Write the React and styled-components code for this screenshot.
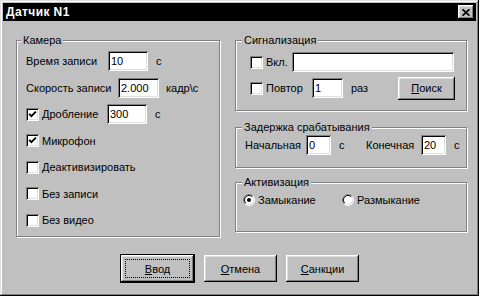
import React from 'react'
import styled, { createGlobalStyle } from 'styled-components'

const Global = createGlobalStyle`
  html, body { margin: 0; padding: 0; background: #c0c0c0; }
  * { box-sizing: border-box; }
`

const raised = `
  box-shadow: inset -1px -1px #000, inset 1px 1px #fff, inset -2px -2px #808080, inset 2px 2px #dfdfdf;
`
const sunken = `
  box-shadow: inset 1px 1px #808080, inset -1px -1px #fff, inset 2px 2px #000, inset -2px -2px #dfdfdf;
`

const Window = styled.div`
  width: 479px;
  height: 296px;
  padding: 3px;
  background: #c0c0c0;
  font-family: "Liberation Sans", Arial, sans-serif;
  font-size: 11px;
  color: #000;
  box-shadow: inset -1px -1px #000, inset 1px 1px #dfdfdf, inset -2px -2px #808080, inset 2px 2px #fff;
`

const TitleBar = styled.div`
  height: 18px;
  background: #000;
  display: flex;
  align-items: center;
  padding: 0 2px 0 3px;
`

const Title = styled.div`
  color: #fff;
  font-weight: bold;
  font-size: 12px;
  letter-spacing: 0.4px;
  flex: 1;
`

const CloseBtn = styled.div`
  width: 16px;
  height: 14px;
  background: #c0c0c0;
  display: flex;
  align-items: center;
  justify-content: center;
  ${raised}
`

const Body = styled.div`
  padding: 19px 0 0 13px;
`

const Columns = styled.div`
  display: flex;
  align-items: flex-start;
`

const RightCol = styled.div`
  display: flex;
  flex-direction: column;
  margin-left: 15px;
`

const Group = styled.div`
  position: relative;
  width: ${p => p.$w}px;
  height: ${p => p.$h}px;
  margin-top: ${p => p.$mt || 0}px;
  padding: ${p => p.$pad};
  border: 1px solid #808080;
  box-shadow: inset 1px 1px #fff, 1px 1px 0 #fff;
  display: flex;
  flex-direction: column;
  gap: ${p => p.$gap || 0}px;
`

const Legend = styled.span`
  position: absolute;
  top: -8px;
  left: ${p => p.$left || 4}px;
  padding: 0 2px;
  background: #c0c0c0;
  line-height: 14px;
`

const Row = styled.div`
  display: flex;
  align-items: center;
  height: 20px;
`

const Label = styled.span`
  width: ${p => (p.$w ? `${p.$w}px` : 'auto')};
  margin-left: ${p => p.$ml || 0}px;
  flex-shrink: 0;
  white-space: nowrap;
`

const Field = styled.div`
  width: ${p => p.$w}px;
  height: 20px;
  background: #fff;
  padding: 0 3px;
  display: flex;
  align-items: center;
  flex-shrink: 0;
  ${sunken}
`

const CheckWrap = styled.label`
  display: flex;
  align-items: center;
  width: ${p => (p.$w ? `${p.$w}px` : 'auto')};
  flex-shrink: 0;
`

const Box = styled.span`
  width: 13px;
  height: 13px;
  background: #fff;
  display: flex;
  align-items: center;
  justify-content: center;
  margin-right: 3px;
  flex-shrink: 0;
  ${sunken}
`

const Button = styled.div`
  width: ${p => p.$w}px;
  height: ${p => p.$h}px;
  margin-left: ${p => (p.$auto ? 'auto' : '0')};
  background: #c0c0c0;
  display: flex;
  align-items: center;
  justify-content: center;
  flex-shrink: 0;
  ${raised}
`

const DefaultFrame = styled.div`
  border: 1px solid #000;
  display: flex;
`

const Focus = styled.span`
  position: absolute;
  inset: 4px;
  border: 1px dotted #000;
`

const FocusButton = styled(Button)`
  position: relative;
`

const ButtonRow = styled.div`
  display: flex;
  align-items: center;
  justify-content: center;
  gap: 9px;
  margin: 17px 0 0 -13px;
`

const Check = ({ checked, children, w }) => (
  <CheckWrap $w={w}>
    <Box>
      {checked && (
        <svg width="9" height="9" viewBox="0 0 9 9">
          <path d="M1.2 3.8 L3.4 6.2 L7.9 1.6" stroke="#000" strokeWidth="1.9" fill="none" />
        </svg>
      )}
    </Box>
    {children}
  </CheckWrap>
)

const Radio = ({ checked, children, w }) => (
  <CheckWrap $w={w}>
    <svg width="12" height="12" viewBox="0 0 12 12" style={{ marginRight: 3 }}>
      <circle cx="6" cy="6" r="5" fill="#fff" />
      <path d="M2.1 9.9 A5.5 5.5 0 0 1 9.9 2.1" stroke="#808080" fill="none" />
      <path d="M9.9 2.1 A5.5 5.5 0 0 1 2.1 9.9" stroke="#fff" fill="none" />
      <path d="M2.8 9.2 A4.5 4.5 0 0 1 9.2 2.8" stroke="#000" fill="none" />
      <path d="M9.2 2.8 A4.5 4.5 0 0 1 2.8 9.2" stroke="#dfdfdf" fill="none" />
      {checked && <circle cx="6" cy="6" r="2" fill="#000" />}
    </svg>
    {children}
  </CheckWrap>
)

export default function App() {
  return (
    <>
      <Global />
      <Window>
        <TitleBar>
          <Title>Датчик N1</Title>
          <CloseBtn>
            <svg width="8" height="7" viewBox="0 0 8 7">
              <path d="M0.5 0.3 L7.5 6.7 M7.5 0.3 L0.5 6.7" stroke="#000" strokeWidth="1.7" />
            </svg>
          </CloseBtn>
        </TitleBar>
        <Body>
          <Columns>
            <Group $w={204} $h={197} $pad="10px 0 0 9px" $gap={6.5}>
              <Legend>Камера</Legend>
              <Row>
                <Label $w={82}>Время записи</Label>
                <Field $w={40}>10</Field>
                <Label $ml={8}>с</Label>
              </Row>
              <Row>
                <Label $w={92}>Скорость записи</Label>
                <Field $w={41}>2.000</Field>
                <Label $ml={7}>кадр\с</Label>
              </Row>
              <Row>
                <Check checked w={81}>Дробление</Check>
                <Field $w={40}>300</Field>
                <Label $ml={8}>с</Label>
              </Row>
              <Row><Check checked>Микрофон</Check></Row>
              <Row><Check>Деактивизировать</Check></Row>
              <Row><Check>Без записи</Check></Row>
              <Row><Check>Без видео</Check></Row>
            </Group>
            <RightCol>
              <Group $w={232} $h={71} $pad="11px 11px 0 14px" $gap={6}>
                <Legend $left={6}>Сигнализация</Legend>
                <Row>
                  <Check w={42}>Вкл.</Check>
                  <Field $w={162} />
                </Row>
                <Row>
                  <Check w={62}>Повтор</Check>
                  <Field $w={31}>1</Field>
                  <Label $ml={8}>раз</Label>
                  <Button $w={57} $h={23} $auto><span><u>П</u>оиск</span></Button>
                </Row>
              </Group>
              <Group $w={232} $h={41} $mt={16} $pad="7px 0 0 9px">
                <Legend $left={6}>Задержка срабатывания</Legend>
                <Row>
                  <Label $w={61}>Начальная</Label>
                  <Field $w={25}>0</Field>
                  <Label $w={27} $ml={8}>с</Label>
                  <Label $w={55}>Конечная</Label>
                  <Field $w={25}>20</Field>
                  <Label $ml={8}>с</Label>
                </Row>
              </Group>
              <Group $w={232} $h={50} $mt={14} $pad="7px 0 0 7px">
                <Legend $left={6}>Активизация</Legend>
                <Row>
                  <Radio checked w={99}>Замыкание</Radio>
                  <Radio>Размыкание</Radio>
                </Row>
              </Group>
            </RightCol>
          </Columns>
          <ButtonRow>
            <DefaultFrame>
              <FocusButton $w={73} $h={27}>
                <Focus />
                <span><u>В</u>вод</span>
              </FocusButton>
            </DefaultFrame>
            <Button $w={73} $h={27}><span><u>О</u>тмена</span></Button>
            <Button $w={73} $h={27}><span><u>С</u>анкции</span></Button>
          </ButtonRow>
        </Body>
      </Window>
    </>
  )
}
